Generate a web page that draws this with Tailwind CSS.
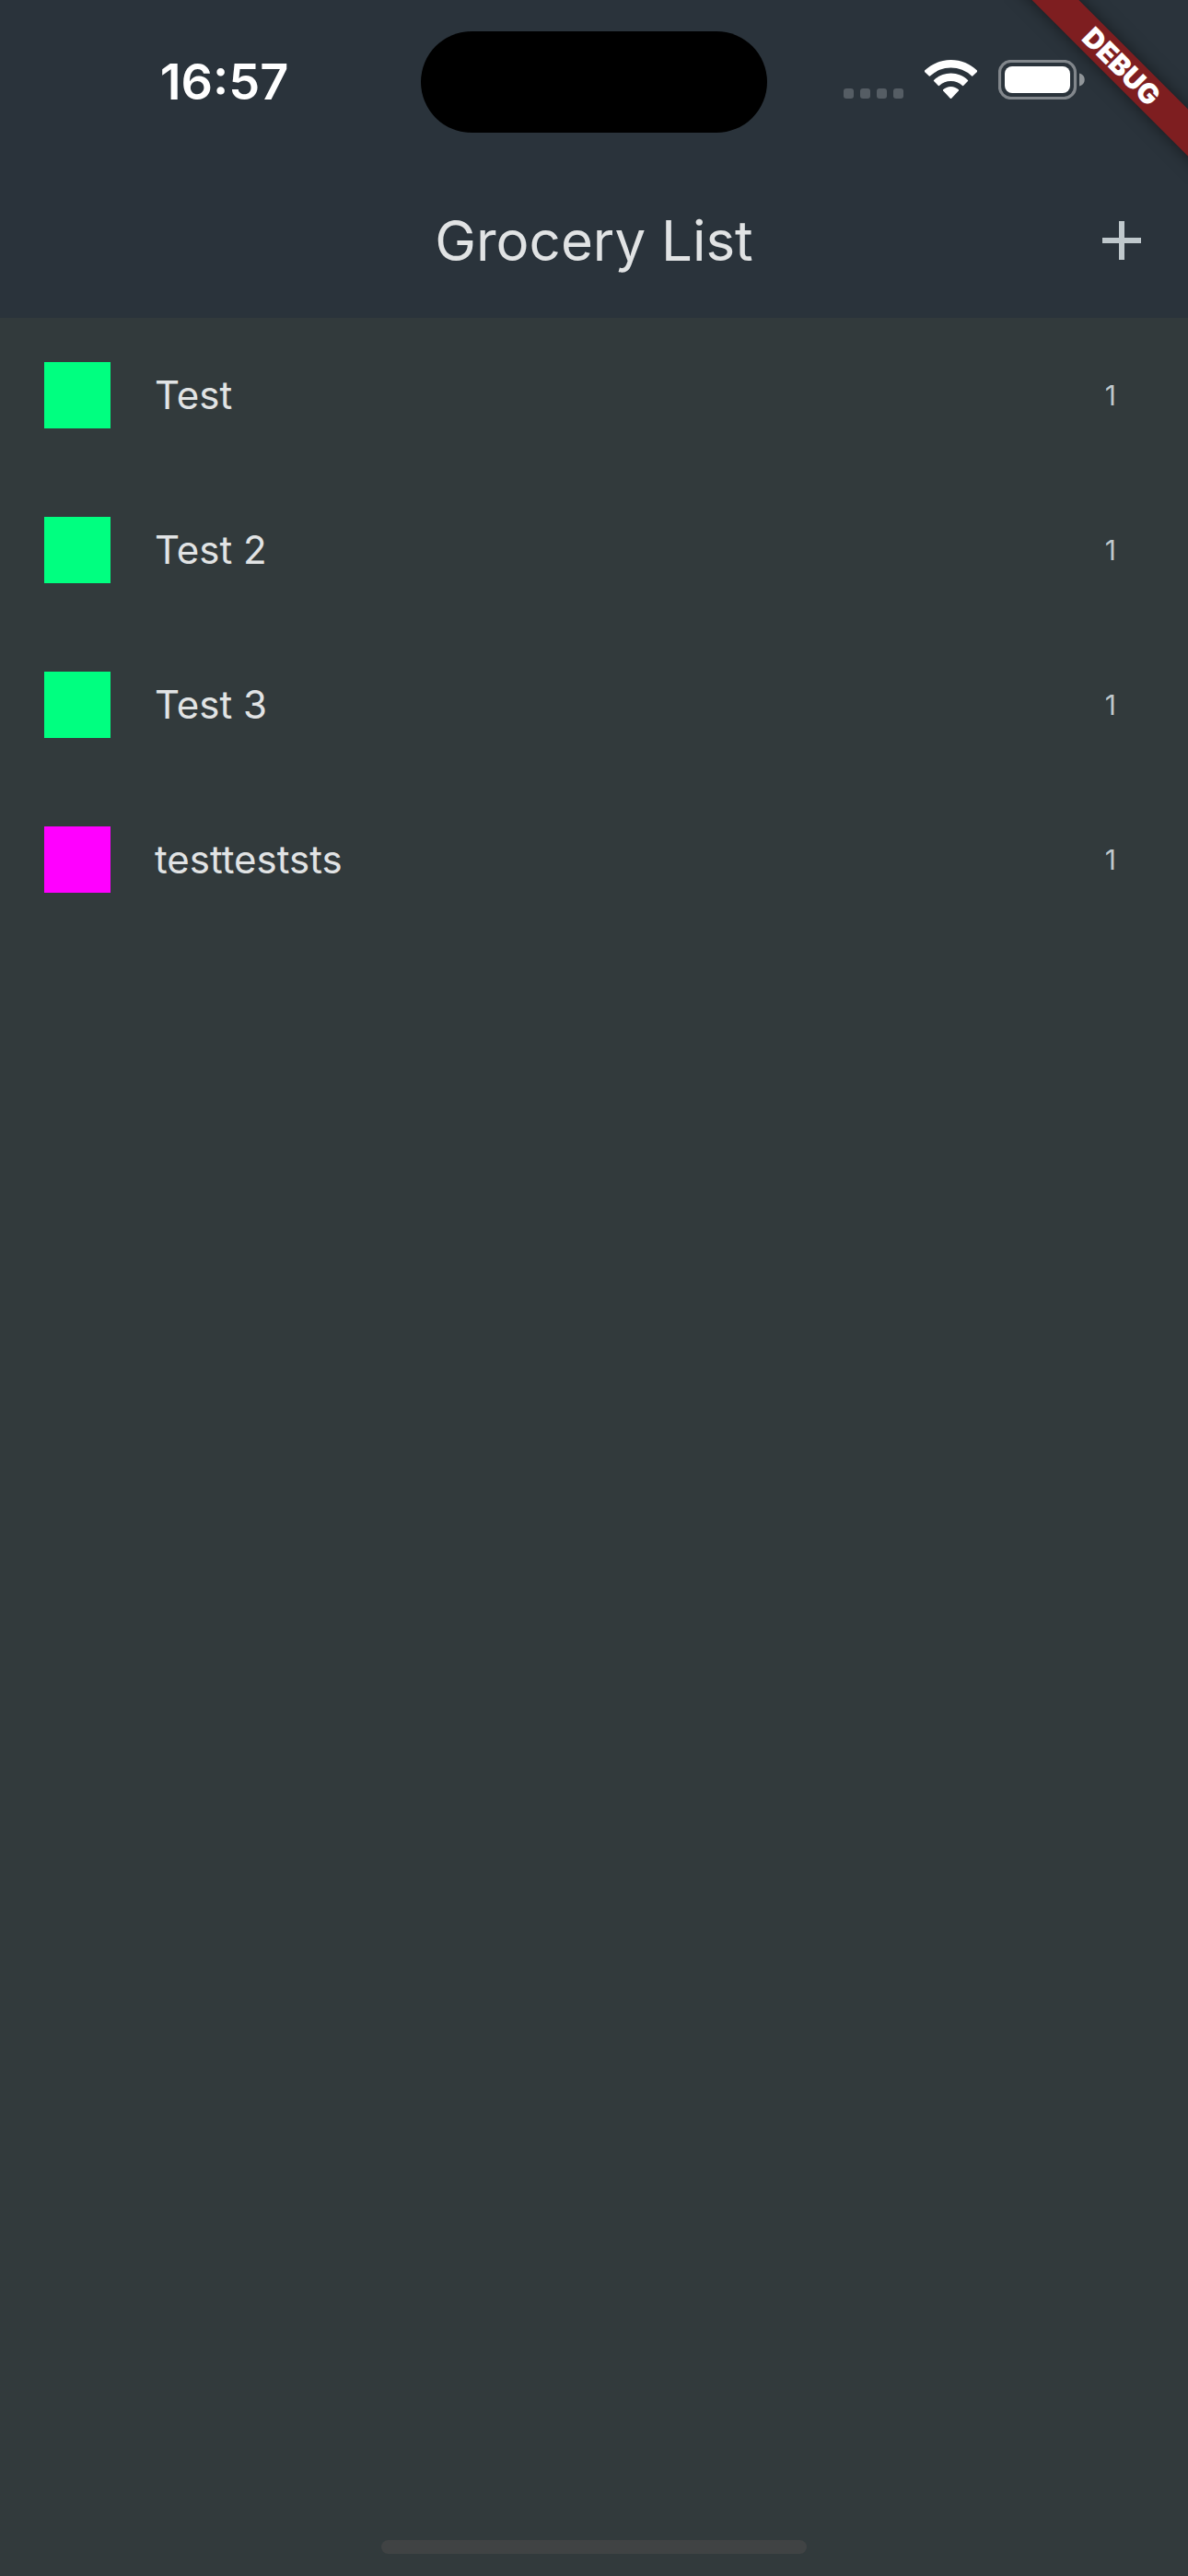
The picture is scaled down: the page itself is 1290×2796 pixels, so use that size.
<!DOCTYPE html>
<html lang="en">
<head>
<meta charset="utf-8">
<meta name="viewport" content="width=device-width, initial-scale=1">
<title>Grocery List</title>
<script src="https://cdn.jsdelivr.net/npm/@tailwindcss/browser@4"></script>
</head>
<body class="relative flex min-h-screen flex-col overflow-x-hidden bg-[#323a3c] font-['Inter',sans-serif] text-[#e1e3e4]">
  <header class="bg-[#2a333b]">
    <!-- Status bar -->
    <div class="grid grid-cols-[1fr_auto_1fr] items-center pt-[34px] pb-[33px]">
      <div class="pl-[30px] text-center text-[54px] leading-[60px] font-semibold text-white">16:57</div>
      <div class="h-[110px] w-[376px] rounded-full bg-black"></div>
      <div class="flex items-end justify-end pr-[112px] pb-[5px]">
        <div class="mb-px flex gap-[7px]">
          <span class="size-[11px] rounded-[3px] bg-[#555d64]"></span>
          <span class="size-[11px] rounded-[3px] bg-[#555d64]"></span>
          <span class="size-[11px] rounded-[3px] bg-[#555d64]"></span>
          <span class="size-[11px] rounded-[3px] bg-[#555d64]"></span>
        </div>
        <svg class="ml-[23px] h-[43px] w-[57px]" viewBox="0 0 57 43" fill="#fff" aria-label="Wi-Fi">
          <path d="M28.500 0C39.500 0 49.600 4.400 57 11.600Q57.400 12.300 57 12.900L52.200 17.600Q51.600 17.900 51.100 17.500A33 33 0 0 0 5.900 17.500Q5.400 17.900 4.800 17.600L0 12.900Q-.4 12.300 0 11.600C7.400 4.400 17.500 0 28.500 0Z"/>
          <path d="M28.500 14.500C35.700 14.500 42.200 17.300 47 21.900Q47.400 22.500 47 23.100L42.100 28Q41.600 28.300 41.100 27.900A19 19 0 0 0 15.900 27.900Q15.400 28.300 14.900 28L10 23.100Q9.600 22.500 10 21.900C14.800 17.300 21.300 14.500 28.500 14.500Z"/>
          <path d="M28.500 28.900C31.700 28.900 34.700 30.200 36.900 32.300Q37.400 32.900 36.900 33.500L29.200 41.700Q28.500 42.300 27.800 41.700L20.100 33.500Q19.600 32.900 20.100 32.300C22.300 30.200 25.300 28.900 28.500 28.900Z"/>
        </svg>
        <svg class="ml-[23px] h-[43px] w-[94px]" viewBox="0 0 94 43" aria-label="Battery full">
          <rect x="1.500" y="1.500" width="82" height="40" rx="12" fill="none" stroke="#82878c" stroke-width="3.200"/>
          <rect x="7" y="7" width="71" height="29" rx="8" fill="#fff"/>
          <path d="M88 14.500C91.500 15.500 93.700 18 93.700 21.500S91.500 27.500 88 28.500Z" fill="#91969a"/>
        </svg>
      </div>
    </div>
    <!-- App bar -->
    <div class="grid h-[168px] grid-cols-[1fr_auto_1fr] items-center">
      <h1 class="col-start-2 text-[60px] leading-[72px] font-normal">Grocery List</h1>
      <button type="button" aria-label="Add item" class="mr-[51px] justify-self-end">
        <svg class="size-[42px]" viewBox="0 0 42 42" fill="#bfc8cc"><path d="M18 0h6v18h18v6H24v18h-6V24H0v-6h18z"/></svg>
      </button>
    </div>
  </header>

  <main class="flex-1">
    <ul class="text-[42px] leading-[60px]">
      <li class="flex h-[168px] items-center gap-12 pr-[78px] pl-12">
        <span class="size-[72px] bg-[#00ff80]"></span><span class="flex-1">Test</span><span class="text-[30px] text-[#bfc8cc]">1</span>
      </li>
      <li class="flex h-[168px] items-center gap-12 pr-[78px] pl-12">
        <span class="size-[72px] bg-[#00ff80]"></span><span class="flex-1">Test 2</span><span class="text-[30px] text-[#bfc8cc]">1</span>
      </li>
      <li class="flex h-[168px] items-center gap-12 pr-[78px] pl-12">
        <span class="size-[72px] bg-[#00ff80]"></span><span class="flex-1">Test 3</span><span class="text-[30px] text-[#bfc8cc]">1</span>
      </li>
      <li class="flex h-[168px] items-center gap-12 pr-[78px] pl-12">
        <span class="size-[72px] bg-[#ff00ff]"></span><span class="flex-1">testteststs</span><span class="text-[30px] text-[#bfc8cc]">1</span>
      </li>
    </ul>
  </main>

  <!-- Home indicator -->
  <div class="mx-auto mb-6 h-[15px] w-[462px] rounded-full bg-[#404344]"></div>

  <!-- Corner ribbon -->
  <div class="pointer-events-none absolute top-0 right-0 size-[200px] overflow-hidden">
    <div class="absolute top-[54px] left-[-22px] h-9 w-[300px] rotate-45 bg-[#7e1e20] text-center text-[30px] leading-9 font-black text-white shadow-[0_0_18px_rgba(0,0,0,0.5)]">DEBUG</div>
  </div>
</body>
</html>
